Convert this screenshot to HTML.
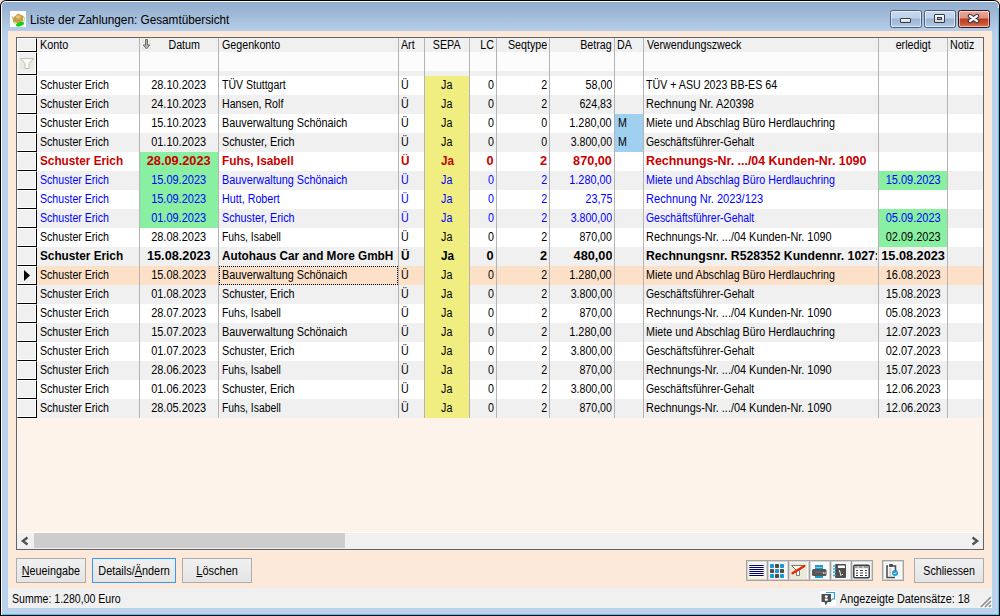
<!DOCTYPE html><html><head><meta charset="utf-8"><style>
*{margin:0;padding:0;box-sizing:border-box}
html,body{width:1000px;height:616px;overflow:hidden;background:#fbe6d6;font-family:"Liberation Sans",sans-serif;font-size:11px;color:#000}
.a{position:absolute}
.t{position:absolute;white-space:nowrap;overflow:hidden;line-height:19px;height:19px}
.l{text-align:left}.c{text-align:center}.r{text-align:right}
.B{font-weight:bold;letter-spacing:0.5px}
</style></head><body><div class="a" style="left:0;top:0;width:1000px;height:616px;background:#000;border-radius:6px 6px 0 0"></div>
<div class="a" style="left:1px;top:1px;width:998px;height:615px;background:#f8fbff;border-radius:5px 5px 0 0"></div>
<div class="a" style="left:2px;top:2px;width:996px;height:614px;background:linear-gradient(#92aecf 0px,#9fb9d7 12px,#b6cee9 29px,#bad2eb 40px,#bad2eb 616px);border-radius:4px 4px 0 0"></div>
<div class="a" style="left:998px;top:8px;width:1px;height:608px;background:#3cc8f0"></div>
<div class="a" style="left:999px;top:6px;width:1px;height:610px;background:#000"></div>
<div class="a" style="left:2px;top:614px;width:996px;height:1px;background:#3cc8f0"></div>
<div class="a" style="left:0;top:615px;width:1000px;height:1px;background:#000"></div>
<div class="a" style="left:10px;top:11px;width:16px;height:16px;background:#fff"></div>
<svg class="a" style="left:10px;top:11px" width="16" height="16" viewBox="0 0 16 16"><path d="M2 5 L4 12 L8 14" fill="none" stroke="#60e060" stroke-width="1" opacity="0.7"/><path d="M13 5.5 L15 7 L13.5 11" fill="none" stroke="#60e060" stroke-width="1" opacity="0.7"/><path d="M3 7 L8 2.5 L13.5 5 L13 10 L8 12.5 L3 10.5z" fill="#cf9a45"/><path d="M6 5 L9 4 L11 6 L9 8 L6 7z" fill="#e6c27e"/><ellipse cx="10" cy="13.2" rx="4.2" ry="2" fill="#10d010" transform="rotate(-18 10 13.2)"/></svg>
<div class="t" style="left:30.00px;top:12px;width:306.12px;height:17px;line-height:17px;font-size:12px;text-align:left;transform:scaleX(0.98);transform-origin:0 0;color:#000;">Liste der Zahlungen: Gesamtübersicht</div>
<div class="a" style="left:890px;top:10px;width:32px;height:18px;border:1px solid #4c5f7d;border-radius:2.5px;background:linear-gradient(#c8d9ed 0px,#bed2e8 7px,#9ab4d2 8px,#a8c1dd 13px,#bcd3ea 17px);box-shadow:inset 0 0 0 1px rgba(255,255,255,0.55)"></div>
<div class="a" style="left:924px;top:10px;width:32px;height:18px;border:1px solid #4c5f7d;border-radius:2.5px;background:linear-gradient(#c8d9ed 0px,#bed2e8 7px,#9ab4d2 8px,#a8c1dd 13px,#bcd3ea 17px);box-shadow:inset 0 0 0 1px rgba(255,255,255,0.55)"></div>
<div class="a" style="left:958px;top:10px;width:32px;height:18px;border:1px solid #44121a;border-radius:2.5px;background:linear-gradient(#e9a898 0px,#de9282 7px,#bc3e1e 8px,#c4502f 12px,#dc8068 17px);box-shadow:inset 0 0 0 1px rgba(255,255,255,0.55)"></div>
<div class="a" style="left:900px;top:18px;width:11px;height:5px;background:linear-gradient(#fafafa,#d4d4d4);border:1px solid #363b4a;border-radius:1px"></div>
<div class="a" style="left:934px;top:14px;width:11px;height:9px;background:linear-gradient(#fafafa,#d4d4d4);border:1px solid #363b4a;border-radius:1px"></div>
<div class="a" style="left:937px;top:17px;width:5px;height:3px;background:#9db7d6;border:1px solid #333a48"></div>
<svg class="a" style="left:967px;top:13px" width="13" height="11" viewBox="0 0 13 11"><path d="M3 3 L10 8 M10 3 L3 8" stroke="#2a3040" stroke-width="4.4" stroke-linecap="round"/><path d="M3 3 L10 8 M10 3 L3 8" stroke="#f6f6f6" stroke-width="2.4" stroke-linecap="round"/></svg>
<div class="a" style="left:8px;top:31px;width:984px;height:557px;background:#fde9d9"></div>
<div class="a" style="left:8px;top:588px;width:984px;height:20px;background:#f0f0f0"></div>
<div class="t" style="left:12.00px;top:591px;width:327.16px;height:17px;line-height:17px;font-size:12px;text-align:left;transform:scaleX(0.8803);transform-origin:0 0;color:#000;">Summe: 1.280,00 Euro</div>
<div class="t" style="left:840.00px;top:591px;width:166.67px;height:17px;line-height:17px;font-size:12px;text-align:left;transform:scaleX(0.9);transform-origin:0 0;color:#000;">Angezeigte Datensätze: 18</div>
<svg class="a" style="left:820px;top:591px" width="16" height="15" viewBox="0 0 16 15"><rect width="16" height="15" fill="#fff"/><path d="M6 1.5 h8.5 v6.5 h-2 l-2 2" fill="none" stroke="#2aa0dc" stroke-width="1.2"/><path d="M1.5 3 h9.5 v8 h-3.3 l-2 3.5 l-1.2 -3.5 h-3z" fill="#4e4e4e"/><circle cx="6.3" cy="5.6" r="1.4" fill="#fff"/><rect x="4.8" y="7.5" width="3" height="2.3" rx="0.8" fill="#fff"/></svg>
<svg class="a" style="left:978px;top:594px" width="14" height="14" viewBox="0 0 14 14"><path d="M13 3 L3 13 M13 7 L7 13 M13 11 L11 13" stroke="#fff" stroke-width="2" transform="translate(0.8,0.8)"/><path d="M13 3 L3 13 M13 7 L7 13 M13 11 L11 13" stroke="#8a8a8a" stroke-width="1.6"/></svg>
<div class="a" style="left:16px;top:37px;width:968px;height:513px;background:#fef3ea;border:1px solid #646464"></div>
<div class="a" style="left:37px;top:38px;width:946px;height:14px;background:#f0f0f0"></div>
<div class="a" style="left:37px;top:52px;width:946px;height:19px;background:#fcfcfc"></div>
<div class="a" style="left:37px;top:71px;width:946px;height:5px;background:#f0f0f0"></div>
<div class="t" style="left:40.00px;top:36px;width:110.00px;height:19px;line-height:19px;font-size:12px;text-align:left;transform:scaleX(0.9);transform-origin:0 0;color:#000;">Konto</div>
<div class="t" style="left:145.80px;top:36px;width:76.40px;height:19px;line-height:19px;font-size:12px;text-align:center;transform:scaleX(0.89);transform-origin:50% 0;color:#000;">Datum</div>
<div class="t" style="left:222.00px;top:36px;width:197.75px;height:19px;line-height:19px;font-size:12px;text-align:left;transform:scaleX(0.89);transform-origin:0 0;color:#000;">Gegenkonto</div>
<div class="t" style="left:401.00px;top:36px;width:25.84px;height:19px;line-height:19px;font-size:12px;text-align:left;transform:scaleX(0.89);transform-origin:0 0;color:#000;">Art</div>
<div class="t" style="left:422.28px;top:36px;width:49.44px;height:19px;line-height:19px;font-size:12px;text-align:center;transform:scaleX(0.89);transform-origin:50% 0;color:#000;">SEPA</div>
<div class="t" style="left:467.03px;top:36px;width:26.97px;height:19px;line-height:19px;font-size:12px;text-align:right;transform:scaleX(0.89);transform-origin:100% 0;color:#000;">LC</div>
<div class="t" style="left:490.82px;top:36px;width:56.18px;height:19px;line-height:19px;font-size:12px;text-align:right;transform:scaleX(0.89);transform-origin:100% 0;color:#000;">Seqtype</div>
<div class="t" style="left:542.34px;top:36px;width:69.66px;height:19px;line-height:19px;font-size:12px;text-align:right;transform:scaleX(0.89);transform-origin:100% 0;color:#000;">Betrag</div>
<div class="t" style="left:617.00px;top:36px;width:29.21px;height:19px;line-height:19px;font-size:12px;text-align:left;transform:scaleX(0.89);transform-origin:0 0;color:#000;">DA</div>
<div class="t" style="left:647.00px;top:36px;width:259.55px;height:19px;line-height:19px;font-size:12px;text-align:left;transform:scaleX(0.89);transform-origin:0 0;color:#000;">Verwendungszweck</div>
<div class="t" style="left:874.80px;top:36px;width:76.40px;height:19px;line-height:19px;font-size:12px;text-align:center;transform:scaleX(0.89);transform-origin:50% 0;color:#000;">erledigt</div>
<div class="t" style="left:950.00px;top:36px;width:37.08px;height:19px;line-height:19px;font-size:12px;text-align:left;transform:scaleX(0.89);transform-origin:0 0;color:#000;">Notiz</div>
<svg class="a" style="left:142px;top:39px" width="9" height="11" viewBox="0 0 9 11"><rect width="9" height="11" fill="#ece9d8"/><path d="M3.5 0.5 h2 v5.5 h2.5 l-3.5 4 l-3.5 -4 h2.5z" fill="#fff" stroke="#fff" stroke-width="2"/><path d="M3.5 0.5 h2 v5.5 h2.5 l-3.5 4 l-3.5 -4 h2.5z" fill="#b4b4b4" stroke="#686868" stroke-width="1"/></svg>
<div class="a" style="left:37px;top:76px;width:946px;height:19px;background:#ffffff"></div>
<div class="a" style="left:425px;top:76px;width:44px;height:19px;background:#f0ee80"></div>
<div class="a" style="left:37px;top:95px;width:946px;height:19px;background:#f0f0f0"></div>
<div class="a" style="left:425px;top:95px;width:44px;height:19px;background:#f0ee80"></div>
<div class="a" style="left:37px;top:114px;width:946px;height:19px;background:#ffffff"></div>
<div class="a" style="left:425px;top:114px;width:44px;height:19px;background:#f0ee80"></div>
<div class="a" style="left:615px;top:114px;width:28px;height:19px;background:#a0d0f0"></div>
<div class="a" style="left:37px;top:133px;width:946px;height:19px;background:#f0f0f0"></div>
<div class="a" style="left:425px;top:133px;width:44px;height:19px;background:#f0ee80"></div>
<div class="a" style="left:615px;top:133px;width:28px;height:19px;background:#a0d0f0"></div>
<div class="a" style="left:37px;top:152px;width:946px;height:19px;background:#ffffff"></div>
<div class="a" style="left:425px;top:152px;width:44px;height:19px;background:#f0ee80"></div>
<div class="a" style="left:140px;top:152px;width:78px;height:19px;background:#88f0a0"></div>
<div class="a" style="left:37px;top:171px;width:946px;height:19px;background:#f0f0f0"></div>
<div class="a" style="left:425px;top:171px;width:44px;height:19px;background:#f0ee80"></div>
<div class="a" style="left:140px;top:171px;width:78px;height:19px;background:#88f0a0"></div>
<div class="a" style="left:879px;top:171px;width:68px;height:19px;background:#88f0a0"></div>
<div class="a" style="left:37px;top:190px;width:946px;height:19px;background:#ffffff"></div>
<div class="a" style="left:425px;top:190px;width:44px;height:19px;background:#f0ee80"></div>
<div class="a" style="left:140px;top:190px;width:78px;height:19px;background:#88f0a0"></div>
<div class="a" style="left:37px;top:209px;width:946px;height:19px;background:#f0f0f0"></div>
<div class="a" style="left:425px;top:209px;width:44px;height:19px;background:#f0ee80"></div>
<div class="a" style="left:140px;top:209px;width:78px;height:19px;background:#88f0a0"></div>
<div class="a" style="left:879px;top:209px;width:68px;height:19px;background:#88f0a0"></div>
<div class="a" style="left:37px;top:228px;width:946px;height:19px;background:#ffffff"></div>
<div class="a" style="left:425px;top:228px;width:44px;height:19px;background:#f0ee80"></div>
<div class="a" style="left:879px;top:228px;width:68px;height:19px;background:#88f0a0"></div>
<div class="a" style="left:37px;top:247px;width:946px;height:19px;background:#f0f0f0"></div>
<div class="a" style="left:425px;top:247px;width:44px;height:19px;background:#f0ee80"></div>
<div class="a" style="left:37px;top:266px;width:946px;height:19px;background:#fde0c8"></div>
<div class="a" style="left:425px;top:266px;width:44px;height:19px;background:#f0ee80"></div>
<div class="a" style="left:37px;top:285px;width:946px;height:19px;background:#f0f0f0"></div>
<div class="a" style="left:425px;top:285px;width:44px;height:19px;background:#f0ee80"></div>
<div class="a" style="left:37px;top:304px;width:946px;height:19px;background:#ffffff"></div>
<div class="a" style="left:425px;top:304px;width:44px;height:19px;background:#f0ee80"></div>
<div class="a" style="left:37px;top:323px;width:946px;height:19px;background:#f0f0f0"></div>
<div class="a" style="left:425px;top:323px;width:44px;height:19px;background:#f0ee80"></div>
<div class="a" style="left:37px;top:342px;width:946px;height:19px;background:#ffffff"></div>
<div class="a" style="left:425px;top:342px;width:44px;height:19px;background:#f0ee80"></div>
<div class="a" style="left:37px;top:361px;width:946px;height:19px;background:#f0f0f0"></div>
<div class="a" style="left:425px;top:361px;width:44px;height:19px;background:#f0ee80"></div>
<div class="a" style="left:37px;top:380px;width:946px;height:19px;background:#ffffff"></div>
<div class="a" style="left:425px;top:380px;width:44px;height:19px;background:#f0ee80"></div>
<div class="a" style="left:37px;top:399px;width:946px;height:19px;background:#f0f0f0"></div>
<div class="a" style="left:425px;top:399px;width:44px;height:19px;background:#f0ee80"></div>
<div class="a" style="left:139px;top:38px;width:1px;height:380px;background:#b4b4b4"></div>
<div class="a" style="left:218px;top:38px;width:1px;height:380px;background:#b4b4b4"></div>
<div class="a" style="left:398px;top:38px;width:1px;height:380px;background:#b4b4b4"></div>
<div class="a" style="left:424px;top:38px;width:1px;height:380px;background:#b4b4b4"></div>
<div class="a" style="left:469px;top:38px;width:1px;height:380px;background:#b4b4b4"></div>
<div class="a" style="left:496px;top:38px;width:1px;height:380px;background:#b4b4b4"></div>
<div class="a" style="left:549px;top:38px;width:1px;height:380px;background:#b4b4b4"></div>
<div class="a" style="left:614px;top:38px;width:1px;height:380px;background:#b4b4b4"></div>
<div class="a" style="left:643px;top:38px;width:1px;height:380px;background:#b4b4b4"></div>
<div class="a" style="left:878px;top:38px;width:1px;height:380px;background:#b4b4b4"></div>
<div class="a" style="left:947px;top:38px;width:1px;height:380px;background:#b4b4b4"></div>
<div class="t" style="left:40.00px;top:76px;width:112.11px;height:19px;line-height:19px;font-size:12px;text-align:left;transform:scaleX(0.8831);transform-origin:0 0;color:#000;">Schuster Erich</div>
<div class="t" style="left:136.38px;top:76px;width:85.25px;height:19px;line-height:19px;font-size:12px;text-align:center;transform:scaleX(0.915);transform-origin:50% 0;color:#000;">28.10.2023</div>
<div class="t" style="left:222.00px;top:76px;width:200.75px;height:19px;line-height:19px;font-size:12px;text-align:left;transform:scaleX(0.8767);transform-origin:0 0;color:#000;">TÜV Stuttgart</div>
<div class="t" style="left:401.00px;top:76px;width:25.84px;height:19px;line-height:19px;font-size:12px;text-align:left;transform:scaleX(0.89);transform-origin:0 0;color:#000;">Ü</div>
<div class="t" style="left:422.28px;top:76px;width:49.44px;height:19px;line-height:19px;font-size:12px;text-align:center;transform:scaleX(0.89);transform-origin:50% 0;color:#000;">Ja</div>
<div class="t" style="left:467.03px;top:76px;width:26.97px;height:19px;line-height:19px;font-size:12px;text-align:right;transform:scaleX(0.89);transform-origin:100% 0;color:#000;">0</div>
<div class="t" style="left:490.82px;top:76px;width:56.18px;height:19px;line-height:19px;font-size:12px;text-align:right;transform:scaleX(0.89);transform-origin:100% 0;color:#000;">2</div>
<div class="t" style="left:542.59px;top:76px;width:69.41px;height:19px;line-height:19px;font-size:12px;text-align:right;transform:scaleX(0.8933);transform-origin:100% 0;color:#000;">58,00</div>
<div class="t" style="left:646.00px;top:76px;width:260.37px;height:19px;line-height:19px;font-size:12px;text-align:left;transform:scaleX(0.8872);transform-origin:0 0;color:#000;">TÜV + ASU 2023 BB-ES 64</div>
<div class="t" style="left:40.00px;top:95px;width:112.11px;height:19px;line-height:19px;font-size:12px;text-align:left;transform:scaleX(0.8831);transform-origin:0 0;color:#000;">Schuster Erich</div>
<div class="t" style="left:136.38px;top:95px;width:85.25px;height:19px;line-height:19px;font-size:12px;text-align:center;transform:scaleX(0.915);transform-origin:50% 0;color:#000;">24.10.2023</div>
<div class="t" style="left:222.00px;top:95px;width:199.07px;height:19px;line-height:19px;font-size:12px;text-align:left;transform:scaleX(0.8841);transform-origin:0 0;color:#000;">Hansen, Rolf</div>
<div class="t" style="left:401.00px;top:95px;width:25.84px;height:19px;line-height:19px;font-size:12px;text-align:left;transform:scaleX(0.89);transform-origin:0 0;color:#000;">Ü</div>
<div class="t" style="left:422.28px;top:95px;width:49.44px;height:19px;line-height:19px;font-size:12px;text-align:center;transform:scaleX(0.89);transform-origin:50% 0;color:#000;">Ja</div>
<div class="t" style="left:467.03px;top:95px;width:26.97px;height:19px;line-height:19px;font-size:12px;text-align:right;transform:scaleX(0.89);transform-origin:100% 0;color:#000;">0</div>
<div class="t" style="left:490.82px;top:95px;width:56.18px;height:19px;line-height:19px;font-size:12px;text-align:right;transform:scaleX(0.89);transform-origin:100% 0;color:#000;">2</div>
<div class="t" style="left:542.06px;top:95px;width:69.94px;height:19px;line-height:19px;font-size:12px;text-align:right;transform:scaleX(0.8865);transform-origin:100% 0;color:#000;">624,83</div>
<div class="t" style="left:646.00px;top:95px;width:251.36px;height:19px;line-height:19px;font-size:12px;text-align:left;transform:scaleX(0.919);transform-origin:0 0;color:#000;">Rechnung Nr. A20398</div>
<div class="t" style="left:40.00px;top:114px;width:112.11px;height:19px;line-height:19px;font-size:12px;text-align:left;transform:scaleX(0.8831);transform-origin:0 0;color:#000;">Schuster Erich</div>
<div class="t" style="left:136.38px;top:114px;width:85.25px;height:19px;line-height:19px;font-size:12px;text-align:center;transform:scaleX(0.915);transform-origin:50% 0;color:#000;">15.10.2023</div>
<div class="t" style="left:222.00px;top:114px;width:194.78px;height:19px;line-height:19px;font-size:12px;text-align:left;transform:scaleX(0.9036);transform-origin:0 0;color:#000;">Bauverwaltung Schönaich</div>
<div class="t" style="left:401.00px;top:114px;width:25.84px;height:19px;line-height:19px;font-size:12px;text-align:left;transform:scaleX(0.89);transform-origin:0 0;color:#000;">Ü</div>
<div class="t" style="left:422.28px;top:114px;width:49.44px;height:19px;line-height:19px;font-size:12px;text-align:center;transform:scaleX(0.89);transform-origin:50% 0;color:#000;">Ja</div>
<div class="t" style="left:467.03px;top:114px;width:26.97px;height:19px;line-height:19px;font-size:12px;text-align:right;transform:scaleX(0.89);transform-origin:100% 0;color:#000;">0</div>
<div class="t" style="left:490.82px;top:114px;width:56.18px;height:19px;line-height:19px;font-size:12px;text-align:right;transform:scaleX(0.89);transform-origin:100% 0;color:#000;">0</div>
<div class="t" style="left:543.44px;top:114px;width:68.56px;height:19px;line-height:19px;font-size:12px;text-align:right;transform:scaleX(0.9043);transform-origin:100% 0;color:#000;">1.280,00</div>
<div class="t" style="left:618.00px;top:114px;width:28.09px;height:19px;line-height:19px;font-size:12px;text-align:left;transform:scaleX(0.89);transform-origin:0 0;color:#000;">M</div>
<div class="t" style="left:646.00px;top:114px;width:258.45px;height:19px;line-height:19px;font-size:12px;text-align:left;transform:scaleX(0.8938);transform-origin:0 0;color:#000;">Miete und Abschlag Büro Herdlauchring</div>
<div class="t" style="left:40.00px;top:133px;width:112.11px;height:19px;line-height:19px;font-size:12px;text-align:left;transform:scaleX(0.8831);transform-origin:0 0;color:#000;">Schuster Erich</div>
<div class="t" style="left:136.38px;top:133px;width:85.25px;height:19px;line-height:19px;font-size:12px;text-align:center;transform:scaleX(0.915);transform-origin:50% 0;color:#000;">01.10.2023</div>
<div class="t" style="left:222.00px;top:133px;width:195.84px;height:19px;line-height:19px;font-size:12px;text-align:left;transform:scaleX(0.8987);transform-origin:0 0;color:#000;">Schuster, Erich</div>
<div class="t" style="left:401.00px;top:133px;width:25.84px;height:19px;line-height:19px;font-size:12px;text-align:left;transform:scaleX(0.89);transform-origin:0 0;color:#000;">Ü</div>
<div class="t" style="left:422.28px;top:133px;width:49.44px;height:19px;line-height:19px;font-size:12px;text-align:center;transform:scaleX(0.89);transform-origin:50% 0;color:#000;">Ja</div>
<div class="t" style="left:467.03px;top:133px;width:26.97px;height:19px;line-height:19px;font-size:12px;text-align:right;transform:scaleX(0.89);transform-origin:100% 0;color:#000;">0</div>
<div class="t" style="left:490.82px;top:133px;width:56.18px;height:19px;line-height:19px;font-size:12px;text-align:right;transform:scaleX(0.89);transform-origin:100% 0;color:#000;">0</div>
<div class="t" style="left:541.95px;top:133px;width:70.05px;height:19px;line-height:19px;font-size:12px;text-align:right;transform:scaleX(0.8851);transform-origin:100% 0;color:#000;">3.800,00</div>
<div class="t" style="left:618.00px;top:133px;width:28.09px;height:19px;line-height:19px;font-size:12px;text-align:left;transform:scaleX(0.89);transform-origin:0 0;color:#000;">M</div>
<div class="t" style="left:646.00px;top:133px;width:266.13px;height:19px;line-height:19px;font-size:12px;text-align:left;transform:scaleX(0.868);transform-origin:0 0;color:#000;">Geschäftsführer-Gehalt</div>
<div class="t" style="left:40.00px;top:152px;width:100.92px;height:19px;line-height:19px;font-size:12px;text-align:left;transform:scaleX(0.981);transform-origin:0 0;color:#c80000;font-weight:bold;">Schuster Erich</div>
<div class="t" style="left:142.32px;top:152px;width:73.36px;height:19px;line-height:19px;font-size:12px;text-align:center;transform:scaleX(1.0633);transform-origin:50% 0;color:#c80000;font-weight:bold;">28.09.2023</div>
<div class="t" style="left:222.00px;top:152px;width:178.48px;height:19px;line-height:19px;font-size:12px;text-align:left;transform:scaleX(0.9861);transform-origin:0 0;color:#c80000;font-weight:bold;">Fuhs, Isabell</div>
<div class="t" style="left:401.00px;top:152px;width:23.47px;height:19px;line-height:19px;font-size:12px;text-align:left;transform:scaleX(0.98);transform-origin:0 0;color:#c80000;font-weight:bold;">Ü</div>
<div class="t" style="left:424.55px;top:152px;width:44.90px;height:19px;line-height:19px;font-size:12px;text-align:center;transform:scaleX(0.98);transform-origin:50% 0;color:#c80000;font-weight:bold;">Ja</div>
<div class="t" style="left:471.36px;top:152px;width:22.64px;height:19px;line-height:19px;font-size:12px;text-align:right;transform:scaleX(1.06);transform-origin:100% 0;color:#c80000;font-weight:bold;">0</div>
<div class="t" style="left:499.83px;top:152px;width:47.17px;height:19px;line-height:19px;font-size:12px;text-align:right;transform:scaleX(1.06);transform-origin:100% 0;color:#c80000;font-weight:bold;">2</div>
<div class="t" style="left:553.18px;top:152px;width:58.82px;height:19px;line-height:19px;font-size:12px;text-align:right;transform:scaleX(1.0541);transform-origin:100% 0;color:#c80000;font-weight:bold;">870,00</div>
<div class="t" style="left:646.00px;top:152px;width:223.64px;height:19px;line-height:19px;font-size:12px;text-align:left;transform:scaleX(1.0329);transform-origin:0 0;color:#c80000;font-weight:bold;">Rechnungs-Nr. .../04 Kunden-Nr. 1090</div>
<div class="t" style="left:40.00px;top:171px;width:112.11px;height:19px;line-height:19px;font-size:12px;text-align:left;transform:scaleX(0.8831);transform-origin:0 0;color:#0000ff;">Schuster Erich</div>
<div class="t" style="left:136.38px;top:171px;width:85.25px;height:19px;line-height:19px;font-size:12px;text-align:center;transform:scaleX(0.915);transform-origin:50% 0;color:#0000ff;">15.09.2023</div>
<div class="t" style="left:222.00px;top:171px;width:194.78px;height:19px;line-height:19px;font-size:12px;text-align:left;transform:scaleX(0.9036);transform-origin:0 0;color:#0000ff;">Bauverwaltung Schönaich</div>
<div class="t" style="left:401.00px;top:171px;width:25.84px;height:19px;line-height:19px;font-size:12px;text-align:left;transform:scaleX(0.89);transform-origin:0 0;color:#0000ff;">Ü</div>
<div class="t" style="left:422.28px;top:171px;width:49.44px;height:19px;line-height:19px;font-size:12px;text-align:center;transform:scaleX(0.89);transform-origin:50% 0;color:#0000ff;">Ja</div>
<div class="t" style="left:467.03px;top:171px;width:26.97px;height:19px;line-height:19px;font-size:12px;text-align:right;transform:scaleX(0.89);transform-origin:100% 0;color:#0000ff;">0</div>
<div class="t" style="left:490.82px;top:171px;width:56.18px;height:19px;line-height:19px;font-size:12px;text-align:right;transform:scaleX(0.89);transform-origin:100% 0;color:#0000ff;">2</div>
<div class="t" style="left:543.44px;top:171px;width:68.56px;height:19px;line-height:19px;font-size:12px;text-align:right;transform:scaleX(0.9043);transform-origin:100% 0;color:#0000ff;">1.280,00</div>
<div class="t" style="left:646.00px;top:171px;width:258.45px;height:19px;line-height:19px;font-size:12px;text-align:left;transform:scaleX(0.8938);transform-origin:0 0;color:#0000ff;">Miete und Abschlag Büro Herdlauchring</div>
<div class="t" style="left:875.84px;top:171px;width:74.32px;height:19px;line-height:19px;font-size:12px;text-align:center;transform:scaleX(0.915);transform-origin:50% 0;color:#0000ff;">15.09.2023</div>
<div class="t" style="left:40.00px;top:190px;width:112.11px;height:19px;line-height:19px;font-size:12px;text-align:left;transform:scaleX(0.8831);transform-origin:0 0;color:#0000ff;">Schuster Erich</div>
<div class="t" style="left:136.38px;top:190px;width:85.25px;height:19px;line-height:19px;font-size:12px;text-align:center;transform:scaleX(0.915);transform-origin:50% 0;color:#0000ff;">15.09.2023</div>
<div class="t" style="left:222.00px;top:190px;width:196.91px;height:19px;line-height:19px;font-size:12px;text-align:left;transform:scaleX(0.8938);transform-origin:0 0;color:#0000ff;">Hutt, Robert</div>
<div class="t" style="left:401.00px;top:190px;width:25.84px;height:19px;line-height:19px;font-size:12px;text-align:left;transform:scaleX(0.89);transform-origin:0 0;color:#0000ff;">Ü</div>
<div class="t" style="left:422.28px;top:190px;width:49.44px;height:19px;line-height:19px;font-size:12px;text-align:center;transform:scaleX(0.89);transform-origin:50% 0;color:#0000ff;">Ja</div>
<div class="t" style="left:467.03px;top:190px;width:26.97px;height:19px;line-height:19px;font-size:12px;text-align:right;transform:scaleX(0.89);transform-origin:100% 0;color:#0000ff;">0</div>
<div class="t" style="left:490.82px;top:190px;width:56.18px;height:19px;line-height:19px;font-size:12px;text-align:right;transform:scaleX(0.89);transform-origin:100% 0;color:#0000ff;">2</div>
<div class="t" style="left:542.59px;top:190px;width:69.41px;height:19px;line-height:19px;font-size:12px;text-align:right;transform:scaleX(0.8933);transform-origin:100% 0;color:#0000ff;">23,75</div>
<div class="t" style="left:646.00px;top:190px;width:249.84px;height:19px;line-height:19px;font-size:12px;text-align:left;transform:scaleX(0.9246);transform-origin:0 0;color:#0000ff;">Rechnung Nr. 2023/123</div>
<div class="t" style="left:40.00px;top:209px;width:112.11px;height:19px;line-height:19px;font-size:12px;text-align:left;transform:scaleX(0.8831);transform-origin:0 0;color:#0000ff;">Schuster Erich</div>
<div class="t" style="left:136.38px;top:209px;width:85.25px;height:19px;line-height:19px;font-size:12px;text-align:center;transform:scaleX(0.915);transform-origin:50% 0;color:#0000ff;">01.09.2023</div>
<div class="t" style="left:222.00px;top:209px;width:195.84px;height:19px;line-height:19px;font-size:12px;text-align:left;transform:scaleX(0.8987);transform-origin:0 0;color:#0000ff;">Schuster, Erich</div>
<div class="t" style="left:401.00px;top:209px;width:25.84px;height:19px;line-height:19px;font-size:12px;text-align:left;transform:scaleX(0.89);transform-origin:0 0;color:#0000ff;">Ü</div>
<div class="t" style="left:422.28px;top:209px;width:49.44px;height:19px;line-height:19px;font-size:12px;text-align:center;transform:scaleX(0.89);transform-origin:50% 0;color:#0000ff;">Ja</div>
<div class="t" style="left:467.03px;top:209px;width:26.97px;height:19px;line-height:19px;font-size:12px;text-align:right;transform:scaleX(0.89);transform-origin:100% 0;color:#0000ff;">0</div>
<div class="t" style="left:490.82px;top:209px;width:56.18px;height:19px;line-height:19px;font-size:12px;text-align:right;transform:scaleX(0.89);transform-origin:100% 0;color:#0000ff;">2</div>
<div class="t" style="left:541.95px;top:209px;width:70.05px;height:19px;line-height:19px;font-size:12px;text-align:right;transform:scaleX(0.8851);transform-origin:100% 0;color:#0000ff;">3.800,00</div>
<div class="t" style="left:646.00px;top:209px;width:266.13px;height:19px;line-height:19px;font-size:12px;text-align:left;transform:scaleX(0.868);transform-origin:0 0;color:#0000ff;">Geschäftsführer-Gehalt</div>
<div class="t" style="left:875.84px;top:209px;width:74.32px;height:19px;line-height:19px;font-size:12px;text-align:center;transform:scaleX(0.915);transform-origin:50% 0;color:#0000ff;">05.09.2023</div>
<div class="t" style="left:40.00px;top:228px;width:112.11px;height:19px;line-height:19px;font-size:12px;text-align:left;transform:scaleX(0.8831);transform-origin:0 0;color:#000;">Schuster Erich</div>
<div class="t" style="left:136.38px;top:228px;width:85.25px;height:19px;line-height:19px;font-size:12px;text-align:center;transform:scaleX(0.915);transform-origin:50% 0;color:#000;">28.08.2023</div>
<div class="t" style="left:222.00px;top:228px;width:203.30px;height:19px;line-height:19px;font-size:12px;text-align:left;transform:scaleX(0.8657);transform-origin:0 0;color:#000;">Fuhs, Isabell</div>
<div class="t" style="left:401.00px;top:228px;width:25.84px;height:19px;line-height:19px;font-size:12px;text-align:left;transform:scaleX(0.89);transform-origin:0 0;color:#000;">Ü</div>
<div class="t" style="left:422.28px;top:228px;width:49.44px;height:19px;line-height:19px;font-size:12px;text-align:center;transform:scaleX(0.89);transform-origin:50% 0;color:#000;">Ja</div>
<div class="t" style="left:467.03px;top:228px;width:26.97px;height:19px;line-height:19px;font-size:12px;text-align:right;transform:scaleX(0.89);transform-origin:100% 0;color:#000;">0</div>
<div class="t" style="left:490.82px;top:228px;width:56.18px;height:19px;line-height:19px;font-size:12px;text-align:right;transform:scaleX(0.89);transform-origin:100% 0;color:#000;">2</div>
<div class="t" style="left:542.06px;top:228px;width:69.94px;height:19px;line-height:19px;font-size:12px;text-align:right;transform:scaleX(0.8865);transform-origin:100% 0;color:#000;">870,00</div>
<div class="t" style="left:646.00px;top:228px;width:254.01px;height:19px;line-height:19px;font-size:12px;text-align:left;transform:scaleX(0.9094);transform-origin:0 0;color:#000;">Rechnungs-Nr. .../04 Kunden-Nr. 1090</div>
<div class="t" style="left:875.84px;top:228px;width:74.32px;height:19px;line-height:19px;font-size:12px;text-align:center;transform:scaleX(0.915);transform-origin:50% 0;color:#000;">02.09.2023</div>
<div class="t" style="left:40.00px;top:247px;width:100.92px;height:19px;line-height:19px;font-size:12px;text-align:left;transform:scaleX(0.981);transform-origin:0 0;color:#000;font-weight:bold;">Schuster Erich</div>
<div class="t" style="left:142.21px;top:247px;width:73.58px;height:19px;line-height:19px;font-size:12px;text-align:center;transform:scaleX(1.06);transform-origin:50% 0;color:#000;font-weight:bold;">15.08.2023</div>
<div class="t" style="left:222.00px;top:247px;width:179.50px;height:19px;line-height:19px;font-size:12px;text-align:left;transform:scaleX(0.9805);transform-origin:0 0;color:#000;font-weight:bold;">Autohaus Car and More GmbH</div>
<div class="t" style="left:401.00px;top:247px;width:23.47px;height:19px;line-height:19px;font-size:12px;text-align:left;transform:scaleX(0.98);transform-origin:0 0;color:#000;font-weight:bold;">Ü</div>
<div class="t" style="left:424.55px;top:247px;width:44.90px;height:19px;line-height:19px;font-size:12px;text-align:center;transform:scaleX(0.98);transform-origin:50% 0;color:#000;font-weight:bold;">Ja</div>
<div class="t" style="left:471.36px;top:247px;width:22.64px;height:19px;line-height:19px;font-size:12px;text-align:right;transform:scaleX(1.06);transform-origin:100% 0;color:#000;font-weight:bold;">0</div>
<div class="t" style="left:499.83px;top:247px;width:47.17px;height:19px;line-height:19px;font-size:12px;text-align:right;transform:scaleX(1.06);transform-origin:100% 0;color:#000;font-weight:bold;">2</div>
<div class="t" style="left:553.51px;top:247px;width:58.49px;height:19px;line-height:19px;font-size:12px;text-align:right;transform:scaleX(1.06);transform-origin:100% 0;color:#000;font-weight:bold;">480,00</div>
<div class="t" style="left:646.00px;top:247px;width:226.92px;height:19px;line-height:19px;font-size:12px;text-align:left;transform:scaleX(1.018);transform-origin:0 0;color:#000;font-weight:bold;">Rechnungsnr. R528352 Kundennr. 1027:</div>
<div class="t" style="left:880.92px;top:247px;width:64.15px;height:19px;line-height:19px;font-size:12px;text-align:center;transform:scaleX(1.06);transform-origin:50% 0;color:#000;font-weight:bold;">15.08.2023</div>
<div class="t" style="left:40.00px;top:266px;width:112.11px;height:19px;line-height:19px;font-size:12px;text-align:left;transform:scaleX(0.8831);transform-origin:0 0;color:#000;">Schuster Erich</div>
<div class="t" style="left:136.38px;top:266px;width:85.25px;height:19px;line-height:19px;font-size:12px;text-align:center;transform:scaleX(0.915);transform-origin:50% 0;color:#000;">15.08.2023</div>
<div class="t" style="left:222.00px;top:266px;width:194.78px;height:19px;line-height:19px;font-size:12px;text-align:left;transform:scaleX(0.9036);transform-origin:0 0;color:#000;">Bauverwaltung Schönaich</div>
<div class="t" style="left:401.00px;top:266px;width:25.84px;height:19px;line-height:19px;font-size:12px;text-align:left;transform:scaleX(0.89);transform-origin:0 0;color:#000;">Ü</div>
<div class="t" style="left:422.28px;top:266px;width:49.44px;height:19px;line-height:19px;font-size:12px;text-align:center;transform:scaleX(0.89);transform-origin:50% 0;color:#000;">Ja</div>
<div class="t" style="left:467.03px;top:266px;width:26.97px;height:19px;line-height:19px;font-size:12px;text-align:right;transform:scaleX(0.89);transform-origin:100% 0;color:#000;">0</div>
<div class="t" style="left:490.82px;top:266px;width:56.18px;height:19px;line-height:19px;font-size:12px;text-align:right;transform:scaleX(0.89);transform-origin:100% 0;color:#000;">2</div>
<div class="t" style="left:543.44px;top:266px;width:68.56px;height:19px;line-height:19px;font-size:12px;text-align:right;transform:scaleX(0.9043);transform-origin:100% 0;color:#000;">1.280,00</div>
<div class="t" style="left:646.00px;top:266px;width:258.45px;height:19px;line-height:19px;font-size:12px;text-align:left;transform:scaleX(0.8938);transform-origin:0 0;color:#000;">Miete und Abschlag Büro Herdlauchring</div>
<div class="t" style="left:875.84px;top:266px;width:74.32px;height:19px;line-height:19px;font-size:12px;text-align:center;transform:scaleX(0.915);transform-origin:50% 0;color:#000;">16.08.2023</div>
<div class="t" style="left:40.00px;top:285px;width:112.11px;height:19px;line-height:19px;font-size:12px;text-align:left;transform:scaleX(0.8831);transform-origin:0 0;color:#000;">Schuster Erich</div>
<div class="t" style="left:136.38px;top:285px;width:85.25px;height:19px;line-height:19px;font-size:12px;text-align:center;transform:scaleX(0.915);transform-origin:50% 0;color:#000;">01.08.2023</div>
<div class="t" style="left:222.00px;top:285px;width:195.84px;height:19px;line-height:19px;font-size:12px;text-align:left;transform:scaleX(0.8987);transform-origin:0 0;color:#000;">Schuster, Erich</div>
<div class="t" style="left:401.00px;top:285px;width:25.84px;height:19px;line-height:19px;font-size:12px;text-align:left;transform:scaleX(0.89);transform-origin:0 0;color:#000;">Ü</div>
<div class="t" style="left:422.28px;top:285px;width:49.44px;height:19px;line-height:19px;font-size:12px;text-align:center;transform:scaleX(0.89);transform-origin:50% 0;color:#000;">Ja</div>
<div class="t" style="left:467.03px;top:285px;width:26.97px;height:19px;line-height:19px;font-size:12px;text-align:right;transform:scaleX(0.89);transform-origin:100% 0;color:#000;">0</div>
<div class="t" style="left:490.82px;top:285px;width:56.18px;height:19px;line-height:19px;font-size:12px;text-align:right;transform:scaleX(0.89);transform-origin:100% 0;color:#000;">2</div>
<div class="t" style="left:541.95px;top:285px;width:70.05px;height:19px;line-height:19px;font-size:12px;text-align:right;transform:scaleX(0.8851);transform-origin:100% 0;color:#000;">3.800,00</div>
<div class="t" style="left:646.00px;top:285px;width:266.13px;height:19px;line-height:19px;font-size:12px;text-align:left;transform:scaleX(0.868);transform-origin:0 0;color:#000;">Geschäftsführer-Gehalt</div>
<div class="t" style="left:875.84px;top:285px;width:74.32px;height:19px;line-height:19px;font-size:12px;text-align:center;transform:scaleX(0.915);transform-origin:50% 0;color:#000;">15.08.2023</div>
<div class="t" style="left:40.00px;top:304px;width:112.11px;height:19px;line-height:19px;font-size:12px;text-align:left;transform:scaleX(0.8831);transform-origin:0 0;color:#000;">Schuster Erich</div>
<div class="t" style="left:136.38px;top:304px;width:85.25px;height:19px;line-height:19px;font-size:12px;text-align:center;transform:scaleX(0.915);transform-origin:50% 0;color:#000;">28.07.2023</div>
<div class="t" style="left:222.00px;top:304px;width:203.30px;height:19px;line-height:19px;font-size:12px;text-align:left;transform:scaleX(0.8657);transform-origin:0 0;color:#000;">Fuhs, Isabell</div>
<div class="t" style="left:401.00px;top:304px;width:25.84px;height:19px;line-height:19px;font-size:12px;text-align:left;transform:scaleX(0.89);transform-origin:0 0;color:#000;">Ü</div>
<div class="t" style="left:422.28px;top:304px;width:49.44px;height:19px;line-height:19px;font-size:12px;text-align:center;transform:scaleX(0.89);transform-origin:50% 0;color:#000;">Ja</div>
<div class="t" style="left:467.03px;top:304px;width:26.97px;height:19px;line-height:19px;font-size:12px;text-align:right;transform:scaleX(0.89);transform-origin:100% 0;color:#000;">0</div>
<div class="t" style="left:490.82px;top:304px;width:56.18px;height:19px;line-height:19px;font-size:12px;text-align:right;transform:scaleX(0.89);transform-origin:100% 0;color:#000;">2</div>
<div class="t" style="left:542.06px;top:304px;width:69.94px;height:19px;line-height:19px;font-size:12px;text-align:right;transform:scaleX(0.8865);transform-origin:100% 0;color:#000;">870,00</div>
<div class="t" style="left:646.00px;top:304px;width:254.01px;height:19px;line-height:19px;font-size:12px;text-align:left;transform:scaleX(0.9094);transform-origin:0 0;color:#000;">Rechnungs-Nr. .../04 Kunden-Nr. 1090</div>
<div class="t" style="left:875.84px;top:304px;width:74.32px;height:19px;line-height:19px;font-size:12px;text-align:center;transform:scaleX(0.915);transform-origin:50% 0;color:#000;">05.08.2023</div>
<div class="t" style="left:40.00px;top:323px;width:112.11px;height:19px;line-height:19px;font-size:12px;text-align:left;transform:scaleX(0.8831);transform-origin:0 0;color:#000;">Schuster Erich</div>
<div class="t" style="left:136.38px;top:323px;width:85.25px;height:19px;line-height:19px;font-size:12px;text-align:center;transform:scaleX(0.915);transform-origin:50% 0;color:#000;">15.07.2023</div>
<div class="t" style="left:222.00px;top:323px;width:194.78px;height:19px;line-height:19px;font-size:12px;text-align:left;transform:scaleX(0.9036);transform-origin:0 0;color:#000;">Bauverwaltung Schönaich</div>
<div class="t" style="left:401.00px;top:323px;width:25.84px;height:19px;line-height:19px;font-size:12px;text-align:left;transform:scaleX(0.89);transform-origin:0 0;color:#000;">Ü</div>
<div class="t" style="left:422.28px;top:323px;width:49.44px;height:19px;line-height:19px;font-size:12px;text-align:center;transform:scaleX(0.89);transform-origin:50% 0;color:#000;">Ja</div>
<div class="t" style="left:467.03px;top:323px;width:26.97px;height:19px;line-height:19px;font-size:12px;text-align:right;transform:scaleX(0.89);transform-origin:100% 0;color:#000;">0</div>
<div class="t" style="left:490.82px;top:323px;width:56.18px;height:19px;line-height:19px;font-size:12px;text-align:right;transform:scaleX(0.89);transform-origin:100% 0;color:#000;">2</div>
<div class="t" style="left:543.44px;top:323px;width:68.56px;height:19px;line-height:19px;font-size:12px;text-align:right;transform:scaleX(0.9043);transform-origin:100% 0;color:#000;">1.280,00</div>
<div class="t" style="left:646.00px;top:323px;width:258.45px;height:19px;line-height:19px;font-size:12px;text-align:left;transform:scaleX(0.8938);transform-origin:0 0;color:#000;">Miete und Abschlag Büro Herdlauchring</div>
<div class="t" style="left:875.84px;top:323px;width:74.32px;height:19px;line-height:19px;font-size:12px;text-align:center;transform:scaleX(0.915);transform-origin:50% 0;color:#000;">12.07.2023</div>
<div class="t" style="left:40.00px;top:342px;width:112.11px;height:19px;line-height:19px;font-size:12px;text-align:left;transform:scaleX(0.8831);transform-origin:0 0;color:#000;">Schuster Erich</div>
<div class="t" style="left:136.38px;top:342px;width:85.25px;height:19px;line-height:19px;font-size:12px;text-align:center;transform:scaleX(0.915);transform-origin:50% 0;color:#000;">01.07.2023</div>
<div class="t" style="left:222.00px;top:342px;width:195.84px;height:19px;line-height:19px;font-size:12px;text-align:left;transform:scaleX(0.8987);transform-origin:0 0;color:#000;">Schuster, Erich</div>
<div class="t" style="left:401.00px;top:342px;width:25.84px;height:19px;line-height:19px;font-size:12px;text-align:left;transform:scaleX(0.89);transform-origin:0 0;color:#000;">Ü</div>
<div class="t" style="left:422.28px;top:342px;width:49.44px;height:19px;line-height:19px;font-size:12px;text-align:center;transform:scaleX(0.89);transform-origin:50% 0;color:#000;">Ja</div>
<div class="t" style="left:467.03px;top:342px;width:26.97px;height:19px;line-height:19px;font-size:12px;text-align:right;transform:scaleX(0.89);transform-origin:100% 0;color:#000;">0</div>
<div class="t" style="left:490.82px;top:342px;width:56.18px;height:19px;line-height:19px;font-size:12px;text-align:right;transform:scaleX(0.89);transform-origin:100% 0;color:#000;">2</div>
<div class="t" style="left:541.95px;top:342px;width:70.05px;height:19px;line-height:19px;font-size:12px;text-align:right;transform:scaleX(0.8851);transform-origin:100% 0;color:#000;">3.800,00</div>
<div class="t" style="left:646.00px;top:342px;width:266.13px;height:19px;line-height:19px;font-size:12px;text-align:left;transform:scaleX(0.868);transform-origin:0 0;color:#000;">Geschäftsführer-Gehalt</div>
<div class="t" style="left:875.84px;top:342px;width:74.32px;height:19px;line-height:19px;font-size:12px;text-align:center;transform:scaleX(0.915);transform-origin:50% 0;color:#000;">02.07.2023</div>
<div class="t" style="left:40.00px;top:361px;width:112.11px;height:19px;line-height:19px;font-size:12px;text-align:left;transform:scaleX(0.8831);transform-origin:0 0;color:#000;">Schuster Erich</div>
<div class="t" style="left:136.38px;top:361px;width:85.25px;height:19px;line-height:19px;font-size:12px;text-align:center;transform:scaleX(0.915);transform-origin:50% 0;color:#000;">28.06.2023</div>
<div class="t" style="left:222.00px;top:361px;width:203.30px;height:19px;line-height:19px;font-size:12px;text-align:left;transform:scaleX(0.8657);transform-origin:0 0;color:#000;">Fuhs, Isabell</div>
<div class="t" style="left:401.00px;top:361px;width:25.84px;height:19px;line-height:19px;font-size:12px;text-align:left;transform:scaleX(0.89);transform-origin:0 0;color:#000;">Ü</div>
<div class="t" style="left:422.28px;top:361px;width:49.44px;height:19px;line-height:19px;font-size:12px;text-align:center;transform:scaleX(0.89);transform-origin:50% 0;color:#000;">Ja</div>
<div class="t" style="left:467.03px;top:361px;width:26.97px;height:19px;line-height:19px;font-size:12px;text-align:right;transform:scaleX(0.89);transform-origin:100% 0;color:#000;">0</div>
<div class="t" style="left:490.82px;top:361px;width:56.18px;height:19px;line-height:19px;font-size:12px;text-align:right;transform:scaleX(0.89);transform-origin:100% 0;color:#000;">2</div>
<div class="t" style="left:542.06px;top:361px;width:69.94px;height:19px;line-height:19px;font-size:12px;text-align:right;transform:scaleX(0.8865);transform-origin:100% 0;color:#000;">870,00</div>
<div class="t" style="left:646.00px;top:361px;width:254.01px;height:19px;line-height:19px;font-size:12px;text-align:left;transform:scaleX(0.9094);transform-origin:0 0;color:#000;">Rechnungs-Nr. .../04 Kunden-Nr. 1090</div>
<div class="t" style="left:875.84px;top:361px;width:74.32px;height:19px;line-height:19px;font-size:12px;text-align:center;transform:scaleX(0.915);transform-origin:50% 0;color:#000;">15.07.2023</div>
<div class="t" style="left:40.00px;top:380px;width:112.11px;height:19px;line-height:19px;font-size:12px;text-align:left;transform:scaleX(0.8831);transform-origin:0 0;color:#000;">Schuster Erich</div>
<div class="t" style="left:136.38px;top:380px;width:85.25px;height:19px;line-height:19px;font-size:12px;text-align:center;transform:scaleX(0.915);transform-origin:50% 0;color:#000;">01.06.2023</div>
<div class="t" style="left:222.00px;top:380px;width:195.84px;height:19px;line-height:19px;font-size:12px;text-align:left;transform:scaleX(0.8987);transform-origin:0 0;color:#000;">Schuster, Erich</div>
<div class="t" style="left:401.00px;top:380px;width:25.84px;height:19px;line-height:19px;font-size:12px;text-align:left;transform:scaleX(0.89);transform-origin:0 0;color:#000;">Ü</div>
<div class="t" style="left:422.28px;top:380px;width:49.44px;height:19px;line-height:19px;font-size:12px;text-align:center;transform:scaleX(0.89);transform-origin:50% 0;color:#000;">Ja</div>
<div class="t" style="left:467.03px;top:380px;width:26.97px;height:19px;line-height:19px;font-size:12px;text-align:right;transform:scaleX(0.89);transform-origin:100% 0;color:#000;">0</div>
<div class="t" style="left:490.82px;top:380px;width:56.18px;height:19px;line-height:19px;font-size:12px;text-align:right;transform:scaleX(0.89);transform-origin:100% 0;color:#000;">2</div>
<div class="t" style="left:541.95px;top:380px;width:70.05px;height:19px;line-height:19px;font-size:12px;text-align:right;transform:scaleX(0.8851);transform-origin:100% 0;color:#000;">3.800,00</div>
<div class="t" style="left:646.00px;top:380px;width:266.13px;height:19px;line-height:19px;font-size:12px;text-align:left;transform:scaleX(0.868);transform-origin:0 0;color:#000;">Geschäftsführer-Gehalt</div>
<div class="t" style="left:875.84px;top:380px;width:74.32px;height:19px;line-height:19px;font-size:12px;text-align:center;transform:scaleX(0.915);transform-origin:50% 0;color:#000;">12.06.2023</div>
<div class="t" style="left:40.00px;top:399px;width:112.11px;height:19px;line-height:19px;font-size:12px;text-align:left;transform:scaleX(0.8831);transform-origin:0 0;color:#000;">Schuster Erich</div>
<div class="t" style="left:136.38px;top:399px;width:85.25px;height:19px;line-height:19px;font-size:12px;text-align:center;transform:scaleX(0.915);transform-origin:50% 0;color:#000;">28.05.2023</div>
<div class="t" style="left:222.00px;top:399px;width:203.30px;height:19px;line-height:19px;font-size:12px;text-align:left;transform:scaleX(0.8657);transform-origin:0 0;color:#000;">Fuhs, Isabell</div>
<div class="t" style="left:401.00px;top:399px;width:25.84px;height:19px;line-height:19px;font-size:12px;text-align:left;transform:scaleX(0.89);transform-origin:0 0;color:#000;">Ü</div>
<div class="t" style="left:422.28px;top:399px;width:49.44px;height:19px;line-height:19px;font-size:12px;text-align:center;transform:scaleX(0.89);transform-origin:50% 0;color:#000;">Ja</div>
<div class="t" style="left:467.03px;top:399px;width:26.97px;height:19px;line-height:19px;font-size:12px;text-align:right;transform:scaleX(0.89);transform-origin:100% 0;color:#000;">0</div>
<div class="t" style="left:490.82px;top:399px;width:56.18px;height:19px;line-height:19px;font-size:12px;text-align:right;transform:scaleX(0.89);transform-origin:100% 0;color:#000;">2</div>
<div class="t" style="left:542.06px;top:399px;width:69.94px;height:19px;line-height:19px;font-size:12px;text-align:right;transform:scaleX(0.8865);transform-origin:100% 0;color:#000;">870,00</div>
<div class="t" style="left:646.00px;top:399px;width:254.01px;height:19px;line-height:19px;font-size:12px;text-align:left;transform:scaleX(0.9094);transform-origin:0 0;color:#000;">Rechnungs-Nr. .../04 Kunden-Nr. 1090</div>
<div class="t" style="left:875.84px;top:399px;width:74.32px;height:19px;line-height:19px;font-size:12px;text-align:center;transform:scaleX(0.915);transform-origin:50% 0;color:#000;">12.06.2023</div>
<div class="a" style="left:219px;top:266px;width:179px;height:19px;border:1px dotted #000"></div>
<div class="a" style="left:17px;top:38px;width:20px;height:14px;background:#f0f0f0;border-top:1px solid #fff;border-left:1px solid #fff;border-right:1px solid #000;border-bottom:1px solid #000;box-shadow:inset -1px -1px 0 #fff"></div>
<div class="a" style="left:17px;top:52px;width:20px;height:23px;background:#f0f0f0;border-top:1px solid #fff;border-left:1px solid #fff;box-shadow:inset -1px -1px 0 #fff;border-right:1px solid #000;border-bottom:1px solid #000"></div>
<div class="a" style="left:17px;top:75px;width:20px;height:20px;background:#f0f0f0;border-top:1px solid #fff;border-left:1px solid #fff;box-shadow:inset -1px -1px 0 #fff;border-right:1px solid #000;border-bottom:1px solid #000"></div>
<div class="a" style="left:17px;top:95px;width:20px;height:19px;background:#f0f0f0;border-top:1px solid #fff;border-left:1px solid #fff;box-shadow:inset -1px -1px 0 #fff;border-right:1px solid #000;border-bottom:1px solid #000"></div>
<div class="a" style="left:17px;top:114px;width:20px;height:19px;background:#f0f0f0;border-top:1px solid #fff;border-left:1px solid #fff;box-shadow:inset -1px -1px 0 #fff;border-right:1px solid #000;border-bottom:1px solid #000"></div>
<div class="a" style="left:17px;top:133px;width:20px;height:19px;background:#f0f0f0;border-top:1px solid #fff;border-left:1px solid #fff;box-shadow:inset -1px -1px 0 #fff;border-right:1px solid #000;border-bottom:1px solid #000"></div>
<div class="a" style="left:17px;top:152px;width:20px;height:19px;background:#f0f0f0;border-top:1px solid #fff;border-left:1px solid #fff;box-shadow:inset -1px -1px 0 #fff;border-right:1px solid #000;border-bottom:1px solid #000"></div>
<div class="a" style="left:17px;top:171px;width:20px;height:19px;background:#f0f0f0;border-top:1px solid #fff;border-left:1px solid #fff;box-shadow:inset -1px -1px 0 #fff;border-right:1px solid #000;border-bottom:1px solid #000"></div>
<div class="a" style="left:17px;top:190px;width:20px;height:19px;background:#f0f0f0;border-top:1px solid #fff;border-left:1px solid #fff;box-shadow:inset -1px -1px 0 #fff;border-right:1px solid #000;border-bottom:1px solid #000"></div>
<div class="a" style="left:17px;top:209px;width:20px;height:19px;background:#f0f0f0;border-top:1px solid #fff;border-left:1px solid #fff;box-shadow:inset -1px -1px 0 #fff;border-right:1px solid #000;border-bottom:1px solid #000"></div>
<div class="a" style="left:17px;top:228px;width:20px;height:19px;background:#f0f0f0;border-top:1px solid #fff;border-left:1px solid #fff;box-shadow:inset -1px -1px 0 #fff;border-right:1px solid #000;border-bottom:1px solid #000"></div>
<div class="a" style="left:17px;top:247px;width:20px;height:19px;background:#f0f0f0;border-top:1px solid #fff;border-left:1px solid #fff;box-shadow:inset -1px -1px 0 #fff;border-right:1px solid #000;border-bottom:1px solid #000"></div>
<div class="a" style="left:17px;top:266px;width:20px;height:19px;background:#f0f0f0;border-top:1px solid #fff;border-left:1px solid #fff;box-shadow:inset -1px -1px 0 #fff;border-right:1px solid #000;border-bottom:1px solid #000"></div>
<div class="a" style="left:17px;top:285px;width:20px;height:19px;background:#f0f0f0;border-top:1px solid #fff;border-left:1px solid #fff;box-shadow:inset -1px -1px 0 #fff;border-right:1px solid #000;border-bottom:1px solid #000"></div>
<div class="a" style="left:17px;top:304px;width:20px;height:19px;background:#f0f0f0;border-top:1px solid #fff;border-left:1px solid #fff;box-shadow:inset -1px -1px 0 #fff;border-right:1px solid #000;border-bottom:1px solid #000"></div>
<div class="a" style="left:17px;top:323px;width:20px;height:19px;background:#f0f0f0;border-top:1px solid #fff;border-left:1px solid #fff;box-shadow:inset -1px -1px 0 #fff;border-right:1px solid #000;border-bottom:1px solid #000"></div>
<div class="a" style="left:17px;top:342px;width:20px;height:19px;background:#f0f0f0;border-top:1px solid #fff;border-left:1px solid #fff;box-shadow:inset -1px -1px 0 #fff;border-right:1px solid #000;border-bottom:1px solid #000"></div>
<div class="a" style="left:17px;top:361px;width:20px;height:19px;background:#f0f0f0;border-top:1px solid #fff;border-left:1px solid #fff;box-shadow:inset -1px -1px 0 #fff;border-right:1px solid #000;border-bottom:1px solid #000"></div>
<div class="a" style="left:17px;top:380px;width:20px;height:19px;background:#f0f0f0;border-top:1px solid #fff;border-left:1px solid #fff;box-shadow:inset -1px -1px 0 #fff;border-right:1px solid #000;border-bottom:1px solid #000"></div>
<div class="a" style="left:17px;top:399px;width:20px;height:19px;background:#f0f0f0;border-top:1px solid #fff;border-left:1px solid #fff;box-shadow:inset -1px -1px 0 #fff;border-right:1px solid #000;border-bottom:1px solid #000"></div>
<svg class="a" style="left:20px;top:58px" width="14" height="11" viewBox="0 0 14 11"><rect width="14" height="11" fill="#ece9d8"/><path d="M0.5 0.5 h13 l-4.5 5 v5 h-4 v-5z" fill="#fafafa" stroke="#c0c0c0" stroke-width="1"/></svg>
<svg class="a" style="left:23px;top:269px" width="8" height="13" viewBox="0 0 8 13"><path d="M1 1 L7 6.5 L1 12z" fill="#000"/></svg>
<div class="a" style="left:17px;top:532px;width:966px;height:1px;background:#fff"></div>
<div class="a" style="left:17px;top:533px;width:966px;height:16px;background:#f0f0f0"></div>
<div class="a" style="left:34px;top:533px;width:311px;height:15px;background:#cdcdcd"></div>
<svg class="a" style="left:20px;top:536px" width="10" height="10" viewBox="0 0 10 10"><path d="M7.5 1.5 L2.8 5 L7.5 8.5" fill="none" stroke="#505050" stroke-width="2.2"/></svg>
<svg class="a" style="left:970px;top:536px" width="10" height="10" viewBox="0 0 10 10"><path d="M2.5 1.5 L7.2 5 L2.5 8.5" fill="none" stroke="#505050" stroke-width="2.2"/></svg>
<div class="a" style="left:16px;top:558px;width:70px;height:25px;border:1px solid #acacac;background:linear-gradient(#f0f0f0,#e5e5e5);"></div>
<div class="t" style="left:13.15px;top:559px;width:75.69px;height:24px;line-height:24px;font-size:12px;text-align:center;transform:scaleX(0.8984);transform-origin:50% 0;color:#000;"><u>N</u>eueingabe</div>
<div class="a" style="left:92px;top:558px;width:84px;height:25px;border:1px solid #3399ff;background:linear-gradient(#f0f0f0,#e5e5e5);"></div>
<div class="t" style="left:88.90px;top:559px;width:90.20px;height:24px;line-height:24px;font-size:12px;text-align:center;transform:scaleX(0.9091);transform-origin:50% 0;color:#000;">Details/<u>Ä</u>ndern</div>
<div class="a" style="left:182px;top:558px;width:70px;height:25px;border:1px solid #acacac;background:linear-gradient(#f0f0f0,#e5e5e5);"></div>
<div class="t" style="left:179.88px;top:559px;width:74.24px;height:24px;line-height:24px;font-size:12px;text-align:center;transform:scaleX(0.9159);transform-origin:50% 0;color:#000;"><u>L</u>öschen</div>
<div class="a" style="left:914px;top:558px;width:70px;height:25px;border:1px solid #acacac;background:linear-gradient(#f0f0f0,#e5e5e5);"></div>
<div class="t" style="left:910.85px;top:559px;width:76.30px;height:24px;line-height:24px;font-size:12px;text-align:center;transform:scaleX(0.8912);transform-origin:50% 0;color:#000;">Schliessen</div>
<div class="a" style="left:746px;top:560px;width:22px;height:21px;border:1px solid #a4a4a4;box-shadow:inset 0 0 0 1px #d4d4d4, inset 0 0 0 2px #fafafa;background:#f4f4f4"></div>
<div class="a" style="left:767px;top:560px;width:22px;height:21px;border:1px solid #a4a4a4;box-shadow:inset 0 0 0 1px #d4d4d4, inset 0 0 0 2px #fafafa;background:#f4f4f4"></div>
<div class="a" style="left:788px;top:560px;width:22px;height:21px;border:1px solid #a4a4a4;box-shadow:inset 0 0 0 1px #d4d4d4, inset 0 0 0 2px #fafafa;background:#f4f4f4"></div>
<div class="a" style="left:809px;top:560px;width:22px;height:21px;border:1px solid #a4a4a4;box-shadow:inset 0 0 0 1px #d4d4d4, inset 0 0 0 2px #fafafa;background:#f4f4f4"></div>
<div class="a" style="left:830px;top:560px;width:22px;height:21px;border:1px solid #a4a4a4;box-shadow:inset 0 0 0 1px #d4d4d4, inset 0 0 0 2px #fafafa;background:#f4f4f4"></div>
<div class="a" style="left:851px;top:560px;width:22px;height:21px;border:1px solid #a4a4a4;box-shadow:inset 0 0 0 1px #d4d4d4, inset 0 0 0 2px #fafafa;background:#f4f4f4"></div>
<div class="a" style="left:882px;top:560px;width:22px;height:21px;border:1px solid #a4a4a4;box-shadow:inset 0 0 0 1px #d4d4d4, inset 0 0 0 2px #fafafa;background:#f4f4f4"></div>
<svg class="a" style="left:748px;top:563px" width="17" height="16" viewBox="0 0 17 16"><rect width="17" height="16" fill="#f0ecd8"/><rect x="1" y="1" width="15" height="14" fill="#fbf8e4"/><rect x="1.2" y="2" width="14.6" height="1.1" rx="0.5" fill="#000080"/><rect x="1.2" y="4" width="14.6" height="1.1" rx="0.5" fill="#000080"/><rect x="1.2" y="6" width="14.6" height="1.1" rx="0.5" fill="#000080"/><rect x="1.2" y="8" width="14.6" height="1.1" rx="0.5" fill="#000080"/><rect x="1.2" y="10" width="14.6" height="1.1" rx="0.5" fill="#000080"/><rect x="1.2" y="12" width="14.6" height="1.1" rx="0.5" fill="#000080"/></svg>
<svg class="a" style="left:769px;top:563px" width="16" height="16" viewBox="0 0 16 16"><rect x="1" y="1" width="4" height="4" rx="0.8" fill="#1898d0"/><rect x="1" y="6" width="4" height="4" rx="0.8" fill="#4c4c4c"/><rect x="1" y="11" width="4" height="4" rx="0.8" fill="#1898d0"/><rect x="6" y="1" width="4" height="4" rx="0.8" fill="#4c4c4c"/><rect x="6" y="6" width="4" height="4" rx="0.8" fill="#1898d0"/><rect x="6" y="11" width="4" height="4" rx="0.8" fill="#4c4c4c"/><rect x="11" y="1" width="4" height="4" rx="0.8" fill="#1898d0"/><rect x="11" y="6" width="4" height="4" rx="0.8" fill="#4c4c4c"/><rect x="11" y="11" width="4" height="4" rx="0.8" fill="#1898d0"/></svg>
<svg class="a" style="left:790px;top:563px" width="17" height="16" viewBox="0 0 17 16"><rect width="17" height="16" fill="#ece9d8"/><path d="M1.5 2.5 h13 l-5 5 v5 h-3 v-5z" fill="#fff" stroke="#7a7a7a" stroke-width="1"/><path d="M2.5 10.2 L14.3 3" stroke="#e62a00" stroke-width="2.4" stroke-linecap="round"/></svg>
<svg class="a" style="left:811px;top:563px" width="17" height="16" viewBox="0 0 17 16"><rect width="17" height="16" fill="#fafafa"/><rect x="4" y="2" width="8" height="5" fill="#1e9ad2"/><rect x="4.5" y="4" width="7" height="1" fill="#7cc4e8"/><rect x="1" y="6" width="14.5" height="7" rx="1.5" fill="#555"/><rect x="4" y="8.5" width="8" height="1" fill="#777"/><circle cx="12.5" cy="10" r="0.7" fill="#fff"/><circle cx="14" cy="10" r="0.7" fill="#fff"/><rect x="4" y="13" width="8" height="2" fill="#1e9ad2"/></svg>
<svg class="a" style="left:832px;top:563px" width="17" height="16" viewBox="0 0 17 16"><rect x="3" y="1" width="11" height="14" rx="1" fill="#4e4e4e"/><rect x="6" y="2.5" width="7" height="2.5" rx="0.6" fill="#fff"/><path d="M1 3h3M1 6h3M1 9h3M1 12.5h3" stroke="#3aa8d8" stroke-width="1.3"/><path d="M7.5 7 l1.5 6 M7 8.5 h1 M9.5 11.5 h1.5" stroke="#e8e8e8" stroke-width="1"/></svg>
<svg class="a" style="left:853px;top:563px" width="17" height="16" viewBox="0 0 17 16"><rect x="0.8" y="2.2" width="15.4" height="12.6" rx="1" fill="#fff" stroke="#3e3e3e" stroke-width="1.5"/><rect x="1.5" y="3" width="14" height="2.2" fill="#9a9a9a"/><circle cx="5" cy="4" r="0.8" fill="#fff"/><circle cx="10" cy="4" r="0.8" fill="#fff"/><path d="M3 7.5h2M7 7.5h3M12 7.5h2M3 10h2M7 10h3M12 10h2M3 12.5h2M7 12.5h3M12 12.5h2" stroke="#404040" stroke-width="1.2"/></svg>
<svg class="a" style="left:884px;top:563px" width="17" height="16" viewBox="0 0 17 16"><path d="M4 3 h-1 v11.5 h8" fill="none" stroke="#4a4a4a" stroke-width="1.5"/><path d="M9 3 h2.5 v5" fill="none" stroke="#4a4a4a" stroke-width="1.5"/><rect x="5" y="1" width="4" height="3" rx="1" fill="#4a4a4a"/><path d="M5.5 6h1.5M5.5 8h1.5M5.5 10h1.5M5.5 12h1.5" stroke="#9a9a9a" stroke-width="1"/><circle cx="11" cy="10" r="3" fill="#1e9ad2"/><path d="M9.6 10 l1 1 l1.8 -1.8" stroke="#fff" stroke-width="1" fill="none"/></svg></body></html>
